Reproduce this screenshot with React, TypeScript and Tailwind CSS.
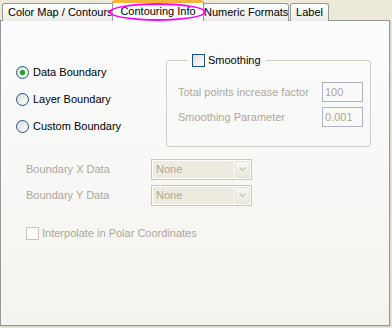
import React from "react";

const disabledText = "text-[#aca899]";

function Radio({ label, checked }: { label: string; checked?: boolean }) {
  return (
    <div className="flex items-center h-[13px]">
      <div className="w-[13px] h-[13px] rounded-full border border-[#1c5180] bg-gradient-to-br from-[#dcdcd7] to-white flex items-center justify-center">
        {checked && <div className="w-[5px] h-[5px] rounded-full bg-[#21a121] shadow-[0_0_1px_#5ad35a]" />}
      </div>
      <span className="ml-[4px] text-black">{label}</span>
    </div>
  );
}

function Combo() {
  return (
    <div className="w-[101px] h-[21px] border border-[#c9c7ba] bg-white p-px flex">
      <div className={`flex-1 bg-[#edebdf] pl-[3px] flex items-center ${disabledText}`}>None</div>
      <div className="w-[15px] ml-px bg-gradient-to-b from-[#f7f7f4] to-[#eae8df] border border-[#e4e2d6] rounded-[2px] flex items-center justify-center">
        <svg width="7" height="5" viewBox="0 0 7 5">
          <path d="M0.5 0.5 L3.5 3.5 L6.5 0.5" fill="none" stroke="#c9c7ba" strokeWidth="1.5" />
        </svg>
      </div>
    </div>
  );
}

function TextBox({ value }: { value: string }) {
  return (
    <div className={`w-[41px] h-[20px] border border-[#a5b6c6] pl-[2px] flex items-center ${disabledText}`}>
      {value}
    </div>
  );
}

export default function App() {
  return (
    <div className="relative w-[392px] h-[328px] bg-[#ece9d8] font-['Liberation_Sans',Arial,sans-serif] text-[11px] leading-[13px] overflow-hidden">
      {/* tab strip */}
      <div className="flex items-end h-[21px] pl-[2px]">
        <div className="w-[112px] h-[18px] border border-b-0 border-[#919b9c] rounded-t-[3px] bg-gradient-to-b from-white to-[#ecebe6] pl-[5px] pt-[2px] whitespace-nowrap overflow-hidden">
          Color Map / Contours
        </div>
        <div className="relative z-10 -ml-[2px] w-[92px] h-[21px] border-x border-[#919b9c] border-t-[3px] border-t-[#f5b53c] rounded-t-[3px] bg-[#fcfcfe] text-center pt-[2px] whitespace-nowrap">
          Contouring Info
        </div>
        <div className="-ml-px w-[86px] h-[18px] border border-b-0 border-[#919b9c] rounded-t-[3px] bg-gradient-to-b from-white to-[#ecebe6] text-center pt-[2px] whitespace-nowrap">
          Numeric Formats
        </div>
        <div className="ml-px w-[39px] h-[18px] border border-b-0 border-[#919b9c] rounded-t-[3px] bg-gradient-to-b from-white to-[#ecebe6] text-center pt-[2px]">
          Label
        </div>
      </div>

      {/* page */}
      <div className="-mt-px w-[390px] h-[306px] border border-[#919b9c] bg-gradient-to-b from-[#fcfcfe] to-[#f4f3ee] shadow-[1px_1px_0_#d6d3c4]">
        <div className="flex">
          <div className="w-[150px] ml-[15px] mt-[45px] flex flex-col gap-[14px]">
            <Radio label="Data Boundary" checked />
            <Radio label="Layer Boundary" />
            <Radio label="Custom Boundary" />
          </div>
          <fieldset className="mt-[32px] w-[205px] h-[94px] border border-[#d0d0bf] rounded-[3px] pl-[11px] pr-[7px]">
            <legend className="ml-[9px] px-[5px] flex items-center h-[14px]">
              <div className="w-[13px] h-[13px] border border-[#1c5180] bg-gradient-to-br from-[#dcdcd7] to-white" />
              <span className="ml-[3px] text-black">Smoothing</span>
            </legend>
            <div className="mt-[15px] flex flex-col gap-[5px]">
              <div className="flex items-center justify-between">
                <span className={disabledText}>Total points increase factor</span>
                <TextBox value="100" />
              </div>
              <div className="flex items-center justify-between">
                <span className={disabledText}>Smoothing Parameter</span>
                <TextBox value="0.001" />
              </div>
            </div>
          </fieldset>
        </div>

        <div className="ml-[25px] mt-[12px] flex flex-col gap-[5px]">
          <div className="flex items-center">
            <span className={`w-[125px] ${disabledText}`}>Boundary X Data</span>
            <Combo />
          </div>
          <div className="flex items-center">
            <span className={`w-[125px] ${disabledText}`}>Boundary Y Data</span>
            <Combo />
          </div>
        </div>

        <div className="ml-[25px] mt-[21px] flex items-center">
          <div className="w-[13px] h-[13px] border border-[#c9c7ba] bg-[#fcfcfb]" />
          <span className={`ml-[3px] ${disabledText}`}>Interpolate in Polar Coordinates</span>
        </div>
      </div>

      {/* highlight ellipse */}
      <div className="absolute z-20 left-[109px] top-[3px] w-[97px] h-[18px] rounded-[50%] border-2 border-[#ff00ff]" />
    </div>
  );
}
